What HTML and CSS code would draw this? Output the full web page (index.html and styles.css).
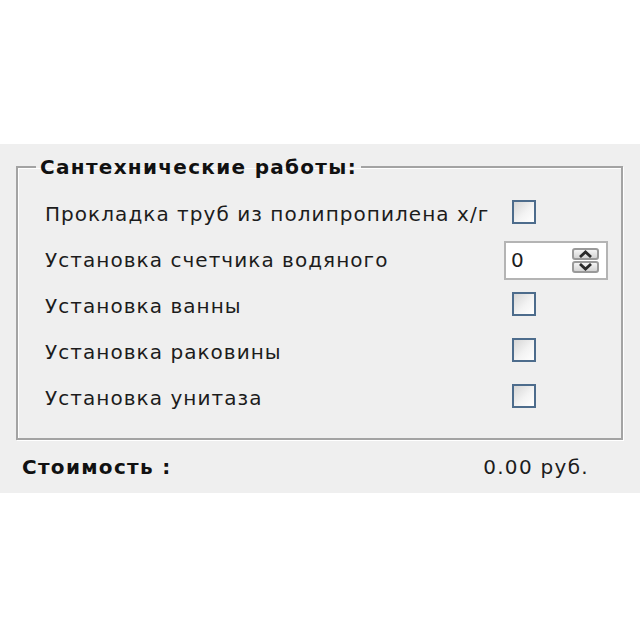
FILE: index.html
```html
<!DOCTYPE html>
<html lang="ru">
<head>
<meta charset="utf-8">
<title>Сантехнические работы</title>
<link rel="stylesheet" href="styles.css">
</head>
<body>
<div class="panel">
  <fieldset class="group">
    <legend class="legend">Сантехнические работы:</legend>
    <div class="rows">
      <div class="label">Прокладка труб из полипропилена х/г</div>
      <div class="ctrl"><span class="check"></span></div>
      <div class="label">Установка счетчика водяного</div>
      <div class="ctrl">
        <div class="spinner">
          <span class="spin-value">0</span>
          <span class="spin-btns">
            <span class="spin-btn">
              <svg width="17" height="8" viewBox="0 0 17 8"><path d="M3 7 L8.5 2 L14 7" fill="none" stroke="#2a2a2a" stroke-width="2.8"/></svg>
            </span>
            <span class="spin-btn">
              <svg width="17" height="8" viewBox="0 0 17 8"><path d="M3 1 L8.5 6 L14 1" fill="none" stroke="#2a2a2a" stroke-width="2.8"/></svg>
            </span>
          </span>
        </div>
      </div>
      <div class="label">Установка ванны</div>
      <div class="ctrl"><span class="check"></span></div>
      <div class="label">Установка раковины</div>
      <div class="ctrl"><span class="check"></span></div>
      <div class="label">Установка унитаза</div>
      <div class="ctrl"><span class="check"></span></div>
    </div>
  </fieldset>
  <div class="total">
    <span class="total-label">Стоимость :</span>
    <span class="total-value">0.00 руб.</span>
  </div>
</div>
</body>
</html>
```

FILE: styles.css
```css
html, body {
  margin: 0;
  padding: 0;
  background: #ffffff;
}
body {
  font-family: "DejaVu Sans", "Liberation Sans", sans-serif;
  color: #1c1c1c;
}
.panel {
  margin-top: 144px;
  height: 349px;
  background: #efefef;
  padding-top: 12px;
  box-sizing: border-box;
}
.group {
  margin: 0 16px 0 16px;
  width: 607px;
  height: 284px;
  box-sizing: border-box;
  border: 2px solid #a3a3a3;
  box-shadow: inset 1px 1px 0 #ffffff, 1px 1px 0 #ffffff;
  padding: 0;
  min-width: 0;
}
.legend {
  margin-left: 18px;
  padding: 0 4px 0 4px;
  font-weight: bold;
  font-size: 20px;
  letter-spacing: 1.3px;
  color: #111;
  line-height: 22px;
}
.rows {
  display: grid;
  grid-template-columns: 459px 1fr;
  grid-auto-rows: 46px;
  padding-left: 27px;
  margin-top: 13px;
  align-items: center;
}
.label {
  font-size: 20px;
  letter-spacing: 1.05px;
  white-space: nowrap;
  line-height: 24px;
}
.ctrl {
  display: flex;
  align-items: center;
}
.check {
  display: block;
  width: 24px;
  height: 24px;
  box-sizing: border-box;
  margin-left: 8px;
  margin-bottom: 5px;
  border: 2px solid #4d6c8c;
  background: linear-gradient(135deg, #d6d6d6 0%, #f3f3f3 55%, #ffffff 100%);
}
.spinner {
  width: 104px;
  height: 39px;
  box-sizing: border-box;
  border: 2px solid #b4b4b4;
  background: #ffffff;
  display: flex;
  align-items: center;
  justify-content: space-between;
  padding: 0 7px 0 5px;
}
.spin-value {
  font-size: 20px;
}
.spin-btns {
  display: flex;
  flex-direction: column;
  gap: 1px;
}
.spin-btn {
  width: 27px;
  height: 12px;
  box-sizing: border-box;
  border: 2px solid #9a9a9a;
  border-radius: 3px;
  background: linear-gradient(#f4f4f4, #d4d4d4);
  display: flex;
  align-items: center;
  justify-content: center;
}
.spin-btn svg {
  display: block;
}
.total {
  display: flex;
  justify-content: space-between;
  align-items: center;
  padding: 0 51px 0 22px;
  margin-top: 14px;
  height: 26px;
}
.total-label {
  font-weight: bold;
  font-size: 20px;
  letter-spacing: 1.3px;
  color: #111;
}
.total-value {
  font-size: 20px;
  letter-spacing: 1.3px;
}
```
